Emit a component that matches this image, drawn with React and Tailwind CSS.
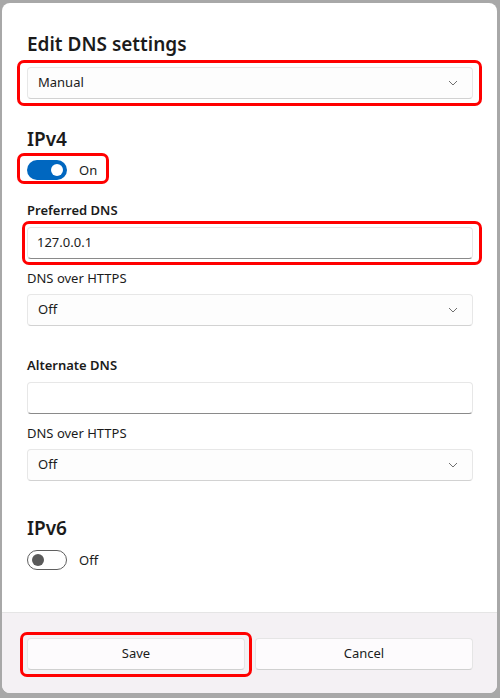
import React from "react";

const font = { fontFamily: '"Segoe UI", "Noto Sans", "Open Sans", sans-serif' };

function Chevron() {
  return (
    <svg width="10" height="6" viewBox="0 0 10 6" className="shrink-0">
      <path d="M1 1 L5 5 L9 1" fill="none" stroke="#707070" strokeWidth="1" />
    </svg>
  );
}

function Select({ value }) {
  return (
    <div className="h-[32px] w-[446px] rounded-[4px] border border-[#e7e7e7] border-b-[#d2d2d2] bg-[#fdfdfd] flex items-center justify-between pl-[10px] pr-[14px] text-[13px] text-[#1b1b1b]">
      <span>{value}</span>
      <Chevron />
    </div>
  );
}

function Input({ value }) {
  return (
    <div className="h-[32px] w-[446px] rounded-[4px] border border-[#e7e7e7] border-b-[#8a8a8a] bg-white flex items-center pl-[9px] text-[13px] text-[#1b1b1b]">
      {value}
    </div>
  );
}

function RedBox({ className }) {
  return <div className={"absolute border-[3px] border-[#ff0000] rounded-[7px] pointer-events-none " + className} />;
}

export default function App() {
  return (
    <div className="w-[500px] h-[698px] bg-[#a8a8a8] pt-[3px] pl-[2px]" style={font}>
      <div className="w-[495px] h-[690px] bg-white rounded-[8px] overflow-hidden flex flex-col text-[#1b1b1b]">
        <div className="flex-1 pl-[25px] pt-[27px] flex flex-col">
          <div className="text-[19px] leading-[28px] font-semibold">Edit DNS settings</div>
          <div className="relative mt-[9px] w-[446px]">
            <Select value="Manual" />
            <RedBox className="-left-[10px] -right-[9px] -top-[7px] -bottom-[7px]" />
          </div>
          <div className="mt-[28px] text-[19px] leading-[24px] font-semibold">IPv4</div>
          <div className="relative mt-[9px] flex items-center w-[74px]">
            <div className="w-[40px] h-[20px] rounded-full bg-[#0067c0] flex items-center justify-end pr-[4px]">
              <div className="w-[12px] h-[12px] rounded-full bg-white" />
            </div>
            <span className="ml-[12px] text-[13px] leading-[20px]">On</span>
            <RedBox className="-left-[10px] -right-[8px] -top-[7px] -bottom-[4px]" />
          </div>
          <div className="mt-[20px] text-[13px] leading-[20px] font-semibold">Preferred DNS</div>
          <div className="relative mt-[7px] w-[446px]">
            <Input value="127.0.0.1" />
            <RedBox className="-left-[5px] -right-[9px] -top-[6px] -bottom-[6px]" />
          </div>
          <div className="mt-[9px] text-[13px] leading-[20px]">DNS over HTTPS</div>
          <div className="mt-[6px]">
            <Select value="Off" />
          </div>
          <div className="mt-[29px] text-[13px] leading-[20px] font-semibold">Alternate DNS</div>
          <div className="mt-[7px]">
            <Input value="" />
          </div>
          <div className="mt-[9px] text-[13px] leading-[20px]">DNS over HTTPS</div>
          <div className="mt-[6px]">
            <Select value="Off" />
          </div>
          <div className="mt-[35px] text-[19px] leading-[24px] font-semibold">IPv6</div>
          <div className="mt-[10px] flex items-center">
            <div className="w-[40px] h-[20px] rounded-full border border-[#5f5f5f] flex items-center pl-[4px]">
              <div className="w-[12px] h-[12px] rounded-full bg-[#5a5a5a]" />
            </div>
            <span className="ml-[12px] text-[13px] leading-[20px]">Off</span>
          </div>
        </div>
        <div className="h-[81px] shrink-0 border-t border-[#e5e5e5] bg-[#f4f1f4] pl-[25px] pt-[25px] flex items-start gap-[10px]">
          <div className="relative w-[218px] h-[32px]">
            <div className="h-[32px] w-[218px] rounded-[4px] border border-[#e5e5e5] border-b-[#d0d0d0] bg-[#fdfbfd] flex items-center justify-center text-[13px]">Save</div>
            <RedBox className="-left-[7px] -right-[7px] -top-[6px] -bottom-[7px]" />
          </div>
          <div className="h-[32px] w-[218px] rounded-[4px] border border-[#e5e5e5] border-b-[#d0d0d0] bg-[#fdfbfd] flex items-center justify-center text-[13px]">Cancel</div>
        </div>
      </div>
    </div>
  );
}
